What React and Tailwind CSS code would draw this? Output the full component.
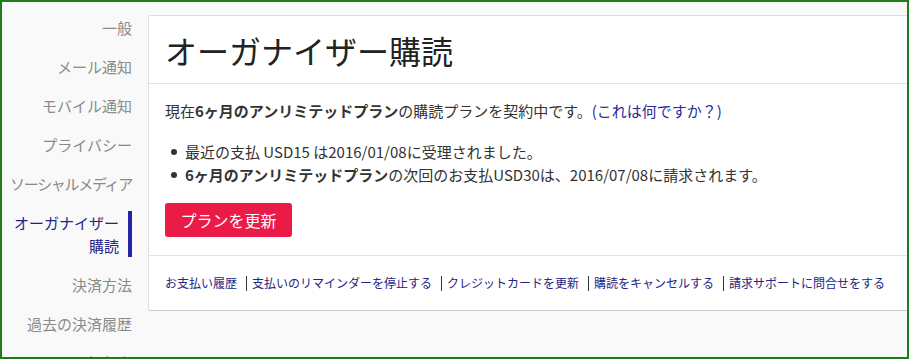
export default function App() {
  const font = { fontFamily: '"Noto Sans CJK JP", "Noto Sans", sans-serif' };
  const items = [
    ["一般", ""],
    ["メール通知", ""],
    ["モバイル通知", ""],
    ["プライバシー", ""],
    ["ソーシャルメディア", "tracking-[-1.3px]"],
  ];
  const items2 = ["決済方法", "過去の決済履歴", "領収書"];
  const links = [
    "お支払い履歴",
    "支払いのリマインダーを停止する",
    "クレジットカードを更新",
    "購読をキャンセルする",
    "請求サポートに問合せをする",
  ];
  return (
    <div
      className="w-[909px] h-[359px] border-2 border-[#1d7d1d] bg-[#f9f9f9] overflow-hidden flex"
      style={font}
    >
      <div className="w-[130px] shrink-0 pt-[6px] text-right text-[15px] text-[#8a8a8a]">
        {items.map(([t, c]) => (
          <div key={t} className={"py-[8px] leading-[23px] whitespace-nowrap " + c}>
            {t}
          </div>
        ))}
        <div className="py-[8px] leading-[23px]">
          <span className="inline-block border-r-[4px] border-[#2424a8] pr-[9px] text-[#23238a]">
            オーガナイザー
            <br />
            購読
          </span>
        </div>
        {items2.map((t) => (
          <div key={t} className="py-[8px] leading-[23px] whitespace-nowrap">
            {t}
          </div>
        ))}
      </div>
      <div className="ml-[16px] mt-[13px] w-[780px] shrink-0 self-start bg-white border border-[#dddddd] border-b-[#c8c8c8] rounded-tl-[2px] rounded-bl-[2px]">
        <div className="px-[16px] pt-[14px] pb-[13px] border-b border-[#e2e2e2]">
          <h1 className="text-[32px] leading-[40px] text-[#222222]">
            オーガナイザー購読
          </h1>
        </div>
        <div className="px-[16px] pt-[17px] pb-[18px] border-b border-[#e2e2e2] text-[15px] text-[#333333]">
          <p className="leading-[20px]">
            現在<b className="font-bold">6ヶ月のアンリミテッドプラン</b>
            の購読プランを契約中です。
            <span className="text-[#2a2a9c]">(これは何ですか？)</span>
          </p>
          <div className="mt-[19px] leading-[23px]">
            <div className="flex items-center">
              <span className="w-[6px] h-[6px] rounded-full bg-[#333333] ml-[6px] mr-[8px]"></span>
              <span>最近の支払 USD15 は2016/01/08に受理されました。</span>
            </div>
            <div className="flex items-center">
              <span className="w-[6px] h-[6px] rounded-full bg-[#333333] ml-[6px] mr-[8px]"></span>
              <span>
                <b className="font-bold">6ヶ月のアンリミテッドプラン</b>
                の次回のお支払USD30は、2016/07/08に請求されます。
              </span>
            </div>
          </div>
          <button className="mt-[17px] w-[127px] h-[34px] rounded-[3px] bg-[#eb1b48] text-white text-[16px]">
            プランを更新
          </button>
        </div>
        <div className="px-[16px] h-[54px] flex items-center text-[12px] text-[#24247e] whitespace-nowrap">
          {links.map((t, i) => (
            <span key={t} className="flex items-center">
              {i > 0 && (
                <span className="w-px h-[15px] bg-[#333333] ml-[9px] mr-[5px]"></span>
              )}
              {t}
            </span>
          ))}
        </div>
      </div>
    </div>
  );
}
